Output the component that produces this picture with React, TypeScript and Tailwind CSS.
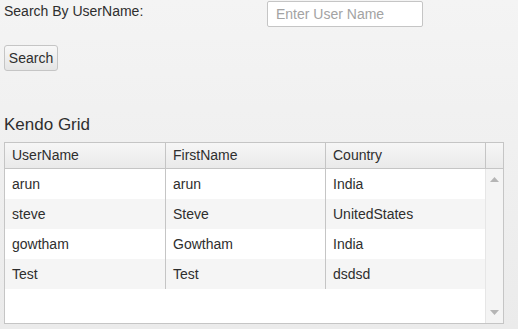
import React from 'react';

interface Row {
  userName: string;
  firstName: string;
  country: string;
}

const rows: Row[] = [
  { userName: 'arun', firstName: 'arun', country: 'India' },
  { userName: 'steve', firstName: 'Steve', country: 'UnitedStates' },
  { userName: 'gowtham', firstName: 'Gowtham', country: 'India' },
  { userName: 'Test', firstName: 'Test', country: 'dsdsd' },
];

export default function App() {
  return (
    <div
      className="w-[518px] h-[329px] overflow-hidden bg-gradient-to-b from-[#f4f4f4] to-[#ebebeb] text-[14px] text-[#2e2e2e]"
      style={{ fontFamily: '"Liberation Sans", Arial, sans-serif' }}
    >
      {/* search form */}
      <div className="flex items-start pl-[4px] pt-[1px]">
        <label className="w-[263px] leading-[18px] pt-[1px]">Search By UserName:</label>
        <input
          type="text"
          placeholder="Enter User Name"
          className="w-[156px] h-[26px] px-[8px] bg-white border border-[#c5c5c5] rounded-[2px] text-[14px] placeholder:text-[#a3a3a3] outline-none"
        />
      </div>
      <div className="pl-[4px] pt-[18px]">
        <button className="w-[54px] h-[26px] rounded-[3px] border border-[#c5c5c5] bg-gradient-to-b from-[#f8f8f8] to-[#e5e5e5] text-[14px] text-[#2e2e2e]">
          Search
        </button>
      </div>

      {/* kendo grid */}
      <div className="pl-[4px] pt-[44px] text-[17px] leading-[20px]">Kendo Grid</div>
      <div className="ml-[4px] mt-[7px] w-[500px] h-[182px] border border-[#c5c5c5] bg-white flex flex-col">
        <div className="flex h-[26px] border-b border-[#c5c5c5] bg-gradient-to-b from-[#f6f6f6] to-[#eaeaea]">
          <div className="w-[161px] border-r border-[#c5c5c5] pl-[7px] leading-[25px]">UserName</div>
          <div className="w-[160px] border-r border-[#c5c5c5] pl-[7px] leading-[25px]">FirstName</div>
          <div className="w-[160px] border-r border-[#c5c5c5] pl-[7px] leading-[25px]">Country</div>
          <div className="flex-1" />
        </div>
        <div className="flex flex-1">
          <div className="w-[480px] flex flex-col">
            {rows.map((r, i) => (
              <div key={i} className={`flex h-[30px] ${i % 2 === 1 ? 'bg-[#f5f5f5]' : 'bg-white'}`}>
                <div className="w-[161px] border-r border-[#c5c5c5] pl-[7px] leading-[30px]">{r.userName}</div>
                <div className="w-[160px] border-r border-[#c5c5c5] pl-[7px] leading-[30px]">{r.firstName}</div>
                <div className="w-[159px] pl-[7px] leading-[30px]">{r.country}</div>
              </div>
            ))}
          </div>
          <div className="flex-1 border-l border-[#e6e6e6] bg-[#f4f4f4] flex flex-col items-center justify-between py-[8px]">
            <svg width="9" height="5" viewBox="0 0 9 5">
              <path d="M4.5 0 L9 5 L0 5 Z" fill="#b5b5b5" />
            </svg>
            <svg width="9" height="5" viewBox="0 0 9 5">
              <path d="M0 0 L9 0 L4.5 5 Z" fill="#b5b5b5" />
            </svg>
          </div>
        </div>
      </div>
    </div>
  );
}
